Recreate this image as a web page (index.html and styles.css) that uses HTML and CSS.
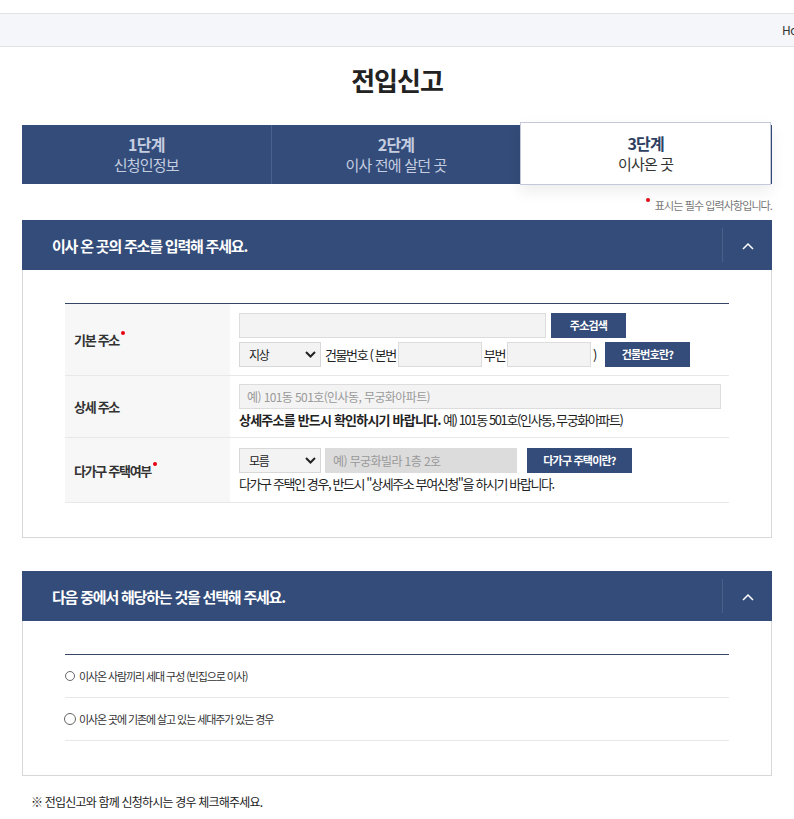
FILE: index.html
```html
<!DOCTYPE html>
<html lang="ko">
<head>
    <meta charset="UTF-8">
    <meta name="viewport" content="width=device-width, initial-scale=1.0">
    <title>전입신고</title>
    <link rel="stylesheet" href="styles.css">
</head>
<body>
    <div class="topbar">
        <div class="breadcrumb">Home &gt; 민원안내</div>
    </div>

    <div class="wrap">
        <h1 class="page-title">전입신고</h1>

        <ol class="steps">
            <li class="step"><strong>1단계</strong><span>신청인정보</span></li>
            <li class="step"><strong>2단계</strong><span>이사 전에 살던 곳</span></li>
            <li class="step step-on"><strong>3단계</strong><span>이사온 곳</span></li>
        </ol>

        <p class="req-note"><i class="dot"></i>표시는 필수 입력사항입니다.</p>

        <!-- 주소 입력 -->
        <section class="panel">
            <div class="panel-head">
                <h2>이사 온 곳의 주소를 입력해 주세요.</h2>
                <button class="toggle" type="button" aria-label="접기">
                    <svg width="12" height="8" viewBox="0 0 12 8"><path d="M1 7 L6 2 L11 7" fill="none" stroke="#fff" stroke-width="1.5"/></svg>
                </button>
            </div>
            <div class="panel-body">
                <table class="form-table">
                    <tr class="row-base">
                        <th>기본 주소<i class="dot"></i></th>
                        <td>
                            <div class="line">
                                <input type="text" class="ipt ipt-addr">
                                <button type="button" class="btn">주소검색</button>
                            </div>
                            <div class="line">
                                <div class="sel">지상<svg width="11" height="7" viewBox="0 0 11 7"><path d="M1 1 L5.5 5.5 L10 1" fill="none" stroke="#222" stroke-width="2"/></svg></div>
                                <span class="txt txt-bldg">건물번호 ( 본번</span>
                                <input type="text" class="ipt ipt-num">
                                <span class="txt">부번</span>
                                <input type="text" class="ipt ipt-num">
                                <span class="txt paren">)</span>
                                <button type="button" class="btn btn-bldg">건물번호란?</button>
                            </div>
                        </td>
                    </tr>
                    <tr class="row-detail">
                        <th>상세 주소</th>
                        <td>
                            <input type="text" class="ipt ipt-detail" placeholder="예) 101동 501호(인사동, 무궁화아파트)">
                            <p class="help"><b>상세주소를 반드시 확인하시기 바랍니다.</b> 예) 101동 501호(인사동, 무궁화아파트)</p>
                        </td>
                    </tr>
                    <tr class="row-multi">
                        <th>다가구 주택여부<i class="dot"></i></th>
                        <td>
                            <div class="line">
                                <div class="sel">모름<svg width="11" height="7" viewBox="0 0 11 7"><path d="M1 1 L5.5 5.5 L10 1" fill="none" stroke="#222" stroke-width="2"/></svg></div>
                                <input type="text" class="ipt ipt-villa" placeholder="예) 무궁화빌라 1층 2호" disabled>
                                <button type="button" class="btn btn-multi">다가구 주택이란?</button>
                            </div>
                            <p class="help">다가구 주택인 경우, 반드시 "상세주소 부여신청"을 하시기 바랍니다.</p>
                        </td>
                    </tr>
                </table>
            </div>
        </section>

        <!-- 세대 구성 선택 -->
        <section class="panel panel-last">
            <div class="panel-head">
                <h2>다음 중에서 해당하는 것을 선택해 주세요.</h2>
                <button class="toggle" type="button" aria-label="접기">
                    <svg width="12" height="8" viewBox="0 0 12 8"><path d="M1 7 L6 2 L11 7" fill="none" stroke="#fff" stroke-width="1.5"/></svg>
                </button>
            </div>
            <div class="panel-body">
                <ul class="radio-list">
                    <li><label><span class="radio"></span>이사온 사람끼리 세대 구성 (빈집으로 이사)</label></li>
                    <li><label><span class="radio radio-lg"></span>이사온 곳에 기존에 살고 있는 세대주가 있는 경우</label></li>
                </ul>
            </div>
        </section>

        <p class="foot-note">※ 전입신고와 함께 신청하시는 경우 체크해주세요.</p>
    </div>
</body>
</html>
```

FILE: styles.css
```css
body {
    margin: 0;
    font-family: "Noto Sans CJK KR", "Noto Sans", sans-serif;
    color: #222;
    background: #fff;
}

.topbar {
    margin-top: 13px;
    height: 32px;
    background-color: #f5f6f9;
    border-top: 1px solid #e1e2e6;
    border-bottom: 1px solid #e1e2e6;
    overflow: hidden;
}

.breadcrumb {
    padding-left: 782px;
    white-space: nowrap;
    font-size: 12px;
    line-height: 32px;
    color: #333;
    letter-spacing: -0.5px;
}

.wrap {
    width: 750px;
    margin: 0 auto;
}

.page-title {
    margin: 0;
    padding: 14px 0 0;
    height: 64px;
    text-align: center;
    font-size: 26px;
    line-height: 38px;
    font-weight: 700;
    color: #222;
    letter-spacing: -1px;
}

/* steps */
.steps {
    display: flex;
    margin: 0;
    padding: 0;
    list-style: none;
    height: 59px;
    background-color: #334c79;
}

.step {
    flex: 1;
    display: flex;
    flex-direction: column;
    align-items: center;
    justify-content: center;
    color: #c5cde0;
    border-left: 1px solid #4a6190;
    letter-spacing: -0.8px;
}

.step:first-child {
    border-left: none;
}

.step strong {
    font-size: 16px;
    line-height: 19px;
    font-weight: 700;
}

.step span {
    font-size: 15px;
    line-height: 21px;
}

.step-on {
    margin: -3px 1px -1px 0;
    background: #fff;
    border: 1px solid #c3c9d8;
    color: #2e3f63;
    box-shadow: 0 6px 14px rgba(0, 0, 0, 0.08);
}

.step-on span {
    color: #333;
}

.req-note {
    margin: 0;
    padding: 13px 0 7px;
    text-align: right;
    font-size: 11px;
    line-height: 16px;
    color: #777;
    letter-spacing: -0.9px;
}

.dot {
    display: inline-block;
    width: 4px;
    height: 4px;
    border-radius: 50%;
    background: #e60012;
    vertical-align: top;
    margin: 1px 5px 0 2px;
}

/* panel */
.panel {
    margin-bottom: 33px;
}

.panel-last {
    margin-bottom: 17px;
}

.panel-head {
    display: flex;
    align-items: center;
    height: 50px;
    background-color: #334c79;
}

.panel-head h2 {
    flex: 1;
    margin: 0;
    padding-left: 30px;
    font-size: 15px;
    font-weight: 700;
    color: #fff;
    letter-spacing: -1.2px;
}

.toggle {
    width: 50px;
    height: 34px;
    border: none;
    border-left: 1px solid #4b5f87;
    background: none;
    padding: 0;
    cursor: pointer;
}

.panel-body {
    border: 1px solid #d8d8d8;
    border-top: none;
    padding: 33px 42px 34px;
}

/* form table */
.form-table {
    width: 100%;
    border-collapse: collapse;
    border-top: 1px solid #344566;
    font-size: 13px;
    letter-spacing: -1.4px;
}

.form-table th,
.form-table td {
    border-bottom: 1px solid #e8e8e8;
}

.form-table th {
    width: 166px;
    background: #f7f7f7;
    text-align: left;
    padding-left: 9px;
    font-size: 13px;
    font-weight: 700;
    color: #333;
    letter-spacing: -1.3px;
    box-sizing: border-box;
}

.form-table td {
    padding: 0 8px 0 9px;
}

.row-base td {
    height: 71px;
}

.row-detail td {
    height: 61px;
}

.row-multi td {
    height: 64px;
}

.line {
    display: flex;
    align-items: center;
    gap: 2px;
}

.line + .line {
    margin-top: 4px;
}

.ipt {
    height: 25px;
    box-sizing: border-box;
    border: 1px solid #dcdcdc;
    background: #f3f3f3;
    font-family: inherit;
    font-size: 12px;
    letter-spacing: -0.6px;
    padding: 0 7px;
    color: #888;
}

.ipt::placeholder {
    color: #999;
}

.ipt-addr {
    width: 307px;
}

.ipt-num {
    width: 84px;
}

.ipt-detail {
    display: block;
    width: 482px;
    height: 25px;
}

.ipt-villa {
    width: 192px;
    margin-left: 2px;
    background: #dcdcdc;
    border-color: #dcdcdc;
}

.sel {
    display: flex;
    align-items: center;
    justify-content: space-between;
    width: 82px;
    height: 25px;
    box-sizing: border-box;
    padding: 0 4px 0 9px;
    border: 1px solid #d8d8d8;
    background: #f3f3f3;
    font-size: 12px;
    color: #222;
}

.txt {
    white-space: nowrap;
    color: #222;
}

.txt-bldg {
    margin-left: 2px;
}

.paren {
    margin: 0 7px 0 0;
}

.btn {
    height: 25px;
    border: none;
    background: #334c79;
    color: #fff;
    font-family: inherit;
    font-size: 11px;
    font-weight: 700;
    letter-spacing: -0.8px;
    cursor: pointer;
}

.line .btn {
    width: 75px;
    margin-left: 3px;
}

.line .btn-bldg {
    width: 85px;
    margin-left: 0;
}

.line .btn-multi {
    width: 105px;
    margin-left: 8px;
}

.help {
    margin: 2px 0 0;
    font-size: 13px;
    line-height: 18px;
    color: #222;
}

.help b {
    font-weight: 700;
    letter-spacing: -0.8px;
}

/* radio list */
.radio-list {
    margin: 0;
    padding: 0;
    list-style: none;
    border-top: 1px solid #344566;
    font-size: 11px;
    letter-spacing: -1.1px;
    color: #333;
}

.radio-list li {
    height: 43px;
    box-sizing: border-box;
    display: flex;
    align-items: center;
    border-bottom: 1px solid #e8e8e8;
}

.radio-list label {
    display: flex;
    align-items: center;
}

.radio {
    display: inline-block;
    width: 8px;
    height: 8px;
    border: 1px solid #666;
    border-radius: 50%;
    margin: 0 4px 0 0;
}

.radio-lg {
    width: 10px;
    height: 10px;
    margin: 0 3px 0 -1px;
}

.foot-note {
    margin: 0 0 0 9px;
    font-size: 12px;
    line-height: 18px;
    color: #222;
    letter-spacing: -0.8px;
}
```
